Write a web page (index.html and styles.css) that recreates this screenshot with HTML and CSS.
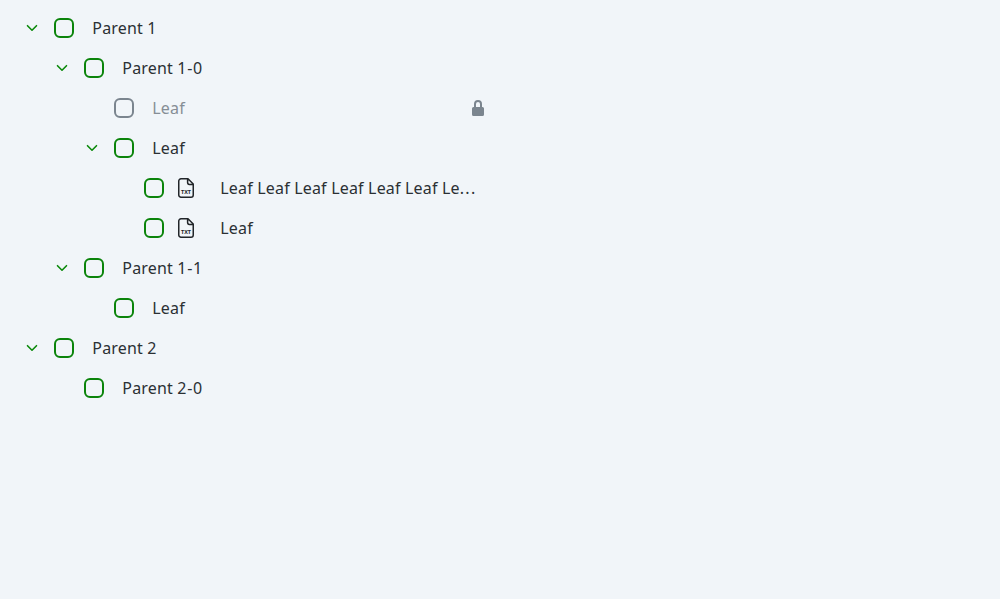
FILE: index.html
```
<!DOCTYPE html>
<html lang="en">
<head>
<meta charset="utf-8">
<title>Tree</title>
<link rel="stylesheet" href="styles.css">
</head>
<body>
<svg width="0" height="0" class="defs" aria-hidden="true">
  <symbol id="chevron" viewBox="0 0 12 8"><path d="M1.500 1.700 6 6.200 10.500 1.700" fill="none" stroke="currentColor" stroke-width="1.6" stroke-linecap="round" stroke-linejoin="round"/></symbol>
  <symbol id="file" viewBox="0 0 16 20">
    <path d="M3 .75H10L15.25 6V17A2.25 2.25 0 0 1 13 19.25H3A2.25 2.25 0 0 1 .75 17V3A2.25 2.25 0 0 1 3 .75Z M9.6 .75V4.6A1.8 1.8 0 0 0 11.4 6.4H15.25" fill="none" stroke="currentColor" stroke-width="1.5" stroke-linejoin="round"/>
  </symbol>
  <symbol id="lock" viewBox="0 0 12 16"><path fill="currentColor" fill-rule="evenodd" d="M2 7V4a4 4 0 0 1 8 0V7H10.500A1.500 1.500 0 0 1 12 8.500V14.500A1.500 1.500 0 0 1 10.500 16H1.500A1.500 1.500 0 0 1 0 14.500V8.500A1.500 1.500 0 0 1 1.500 7ZM4 7H8V4a2 2 0 0 0-4 0Z"/></symbol>
</svg>
<ul class="tree">
  <li>
    <div class="row"><span class="toggle"><svg><use href="#chevron"/></svg></span><span class="box"></span><span class="label">Parent 1</span></div>
    <ul>
      <li>
        <div class="row"><span class="toggle"><svg><use href="#chevron"/></svg></span><span class="box"></span><span class="label">Parent <span class="index">1-0</span></span></div>
        <ul>
          <li><div class="row disabled"><span class="toggle"></span><span class="box"></span><span class="label">Leaf</span><svg class="lock"><use href="#lock"/></svg></div></li>
          <li>
            <div class="row"><span class="toggle"><svg><use href="#chevron"/></svg></span><span class="box"></span><span class="label">Leaf</span></div>
            <ul>
              <li><div class="row"><span class="toggle"></span><span class="box"></span><svg class="file" viewBox="0 0 16 20"><use href="#file"/><text x="8" y="16" text-anchor="middle" textLength="10" lengthAdjust="spacingAndGlyphs" class="file-type">TXT</text></svg><span class="label">Leaf Leaf Leaf Leaf Leaf Leaf Le<span class="more">...</span></span></div></li>
              <li><div class="row"><span class="toggle"></span><span class="box"></span><svg class="file" viewBox="0 0 16 20"><use href="#file"/><text x="8" y="16" text-anchor="middle" textLength="10" lengthAdjust="spacingAndGlyphs" class="file-type">TXT</text></svg><span class="label">Leaf</span></div></li>
            </ul>
          </li>
        </ul>
      </li>
      <li>
        <div class="row"><span class="toggle"><svg><use href="#chevron"/></svg></span><span class="box"></span><span class="label">Parent <span class="index">1-1</span></span></div>
        <ul>
          <li><div class="row"><span class="toggle"></span><span class="box"></span><span class="label">Leaf</span></div></li>
        </ul>
      </li>
    </ul>
  </li>
  <li>
    <div class="row"><span class="toggle"><svg><use href="#chevron"/></svg></span><span class="box"></span><span class="label">Parent 2</span></div>
    <ul>
      <li><div class="row"><span class="toggle"></span><span class="box"></span><span class="label">Parent <span class="index">2-0</span></span></div></li>
    </ul>
  </li>
</ul>
</body>
</html>
```
FILE: styles.css
```
body {
  margin: 0;
  background: #f1f5f9;
  color: #2b3034;
  font: 16px/24px "Noto Sans", sans-serif;
  letter-spacing: 0.18px;
}
.defs { display: block; }
.tree {
  width: 460px;
  padding: 8px 0 0 24px;
}
ul {
  margin: 0;
  padding: 0;
  list-style: none;
}
ul ul { padding-left: 30px; }
.row {
  display: flex;
  align-items: center;
  height: 40px;
}
.toggle {
  display: flex;
  flex: none;
  justify-content: center;
  width: 16px;
  margin-right: 14px;
  color: #0b8a0b;
}
.toggle svg { width: 12px; height: 8px; }
.box {
  box-sizing: border-box;
  flex: none;
  width: 20px;
  height: 20px;
  border: 2px solid #0b840b;
  border-radius: 6px;
}
.label {
  flex: 1;
  min-width: 0;
  margin-left: 18.3px;
  overflow: hidden;
  text-overflow: ellipsis;
  white-space: nowrap;
}
.index { letter-spacing: 0.7px; }
.more { letter-spacing: 1.3px; }
.file {
  flex: none;
  width: 16px;
  height: 20px;
  margin: 0 8px 0 14px;
  color: #212529;
}
.file-type { font: 700 6px "Noto Sans", sans-serif; letter-spacing: 0; fill: currentColor; }
.lock { flex: none; width: 12px; height: 16px; }
.disabled { color: #868e96; }
.disabled .box { border-color: #7b858f; }
.disabled .lock { color: #7b858f; }
```
